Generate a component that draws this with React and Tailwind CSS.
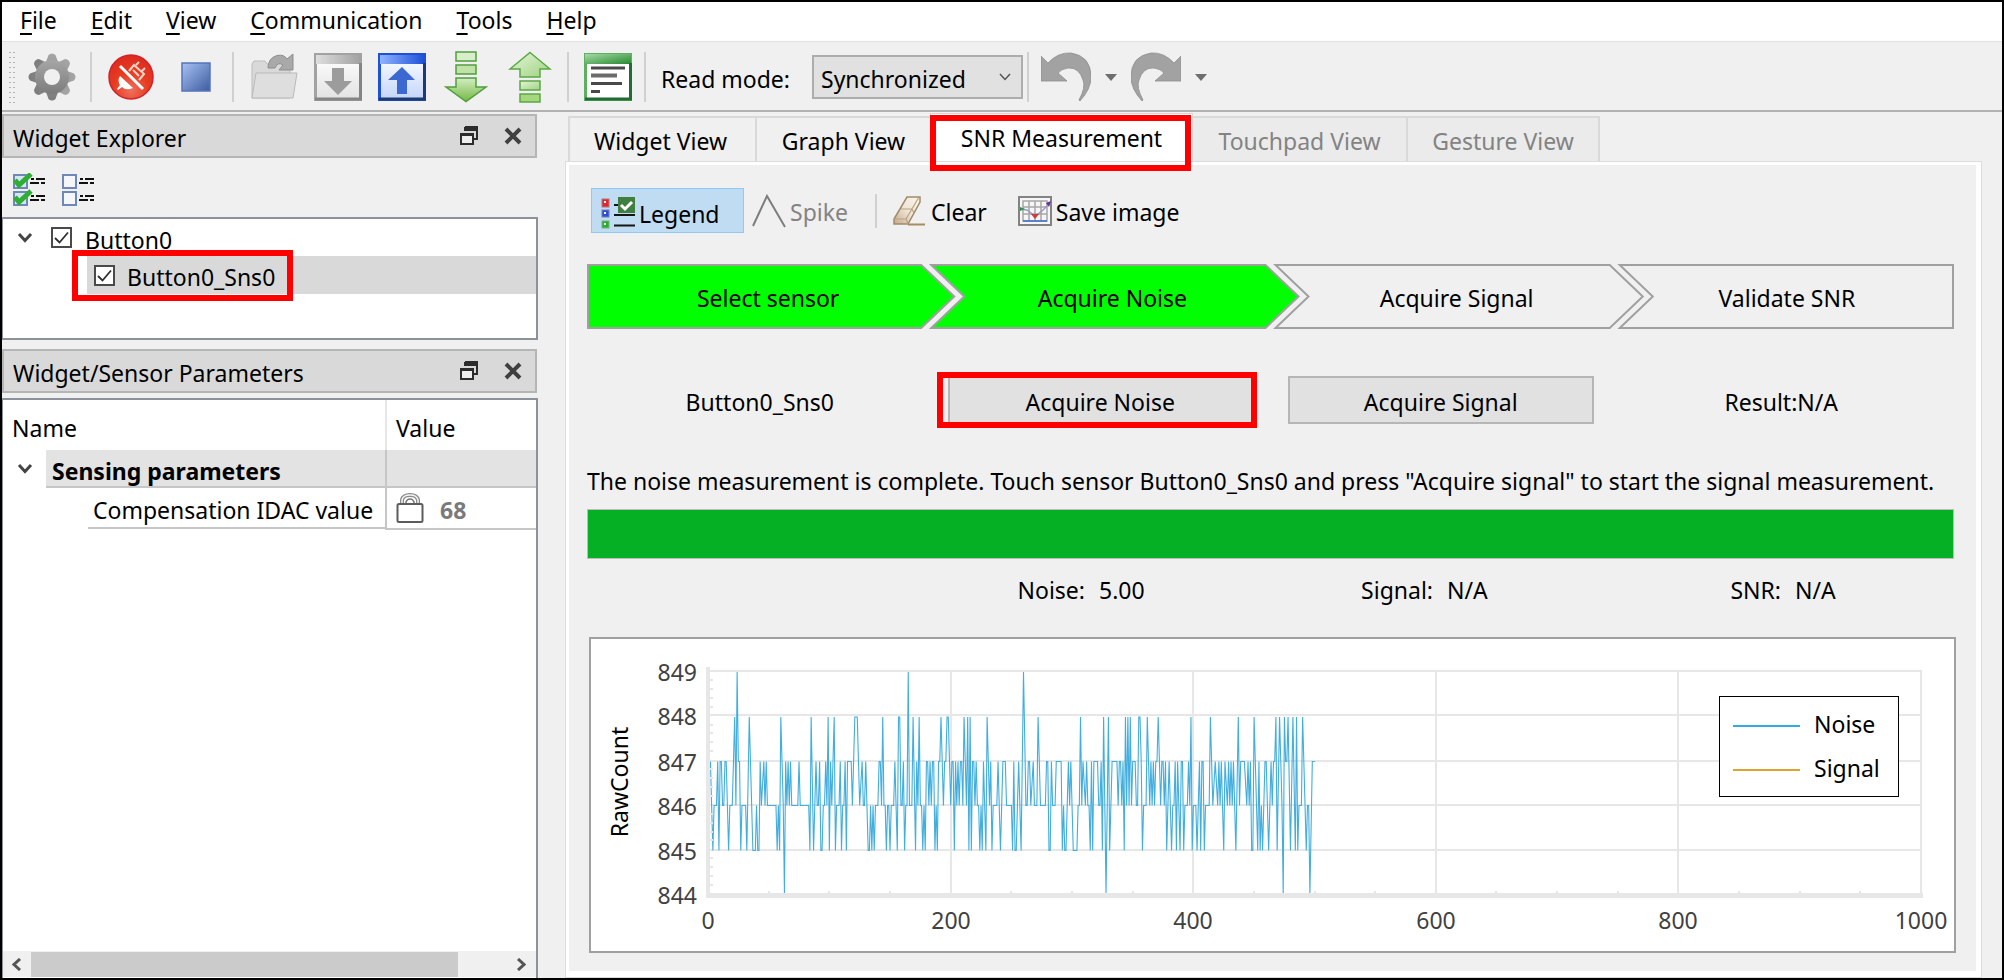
import React from "react";

const SAMPLES =
  "2:7 4:5 5:6 7:6 8:7 9:5 10:7 11:7 12:6 13:6 14:7 15:7 17:5 18:6 20:6 22:8 23:6 24:9 25:7 26:7 27:5 28:6 31:6 32:5 34:8 37:5 39:5 40:6 41:5 42:5 43:7 44:6 46:7 47:6 48:7 49:6 56:6 57:5 58:6 59:5 60:8 62:6 63:4 64:7 65:6 66:7 67:6 68:7 69:6 74:6 75:7 76:6 83:6 84:5 85:8 87:5 89:7 90:6 91:6 92:7 93:5 94:5 95:6 96:6 97:7 98:6 99:8 100:5 101:7 102:6 104:8 105:5 106:6 108:6 109:7 110:5 111:6 112:6 113:7 114:5 115:7 118:7 119:6 121:8 123:8 125:6 127:7 128:6 129:6 130:7 132:5 133:5 134:6 135:5 136:6 137:5 138:6 140:6 141:7 142:7 143:6 144:8 145:6 146:6 147:5 148:6 149:6 150:5 151:6 153:6 154:7 156:5 157:8 158:8 159:6 160:6 161:7 162:5 163:6 164:6 165:9 166:6 168:6 169:8 171:5 172:7 173:6 174:8 175:6 176:6 177:5 178:6 179:5 180:7 181:7 182:6 183:7 184:6 185:7 186:7 187:5 188:6 189:5 190:7 191:7 192:8 194:6 195:7 196:7 197:8 198:8 200:6 201:7 202:7 203:5 204:7 205:6 206:7 207:6 208:7 209:7 210:6 211:8 213:6 214:8 215:5 216:8 217:5 218:7 219:7 220:6 221:7 222:6 223:6 224:5 225:6 226:5 227:7 229:5 230:8 232:6 233:7 234:5 235:6 238:6 239:7 241:5 243:7 245:7 246:6 250:6 251:5 252:7 253:5 254:5 255:6 256:7 257:6 258:5 260:9 262:6 263:6 264:7 265:7 266:6 268:7 269:6 271:6 272:8 274:6 278:6 279:7 280:7 281:5 282:5 283:7 284:6 286:6 287:7 291:7 292:5 293:6 294:5 295:5 297:7 298:6 299:7 301:5 304:5 305:6 306:6 307:8 308:6 309:7 311:6 312:7 313:6 314:6 315:5 316:7 317:5 318:7 321:7 322:6 323:6 324:7 325:5 326:8 328:4 330:8 331:5 333:7 337:7 338:6 339:7 340:7 341:6 342:7 343:5 344:8 345:6 346:8 347:6 348:8 349:6 350:7 352:7 353:6 354:6 355:8 356:8 357:7 358:5 359:6 361:6 362:8 364:6 365:7 366:6 367:7 368:6 369:7 370:7 371:8 373:6 374:7 375:7 376:6 377:7 378:5 380:7 382:5 383:6 384:6 385:7 386:5 387:7 389:5 390:7 391:7 392:5 393:6 395:6 396:7 397:6 398:8 399:5 400:6 402:6 403:5 405:7 406:5 407:7 408:7 409:5 410:6 413:6 414:8 416:6 418:7 420:6 421:7 422:6 423:7 425:5 426:7 428:6 429:7 430:6 431:7 432:6 433:7 435:5 437:8 438:6 439:7 442:7 444:6 445:7 446:6 447:7 448:5 449:5 450:8 452:6 453:5 454:7 455:5 456:6 457:5 459:7 460:7 462:5 464:7 465:6 466:7 467:7 468:8 469:5 471:8 473:6 474:4 475:8 476:7 477:7 478:8 480:5 482:8 484:5 485:8 486:5 487:6 489:6 490:8 492:6 493:5 494:6 495:6 496:4 498:7 500:7";

const X0 = 117;
const PER_SAMPLE = 1.2135;
const LEVEL_Y = { 4: 254, 5: 210.5, 6: 165.5, 7: 121.5, 8: 77, 9: 32 };
const noisePoints = SAMPLES.split(" ")
  .map((pair) => {
    const [n, v] = pair.split(":");
    return `${(X0 + Number(n) * PER_SAMPLE).toFixed(2)},${LEVEL_Y[v]}`;
  })
  .join(" ");

const Y_LABELS = [
  [849, 31],
  [848, 75],
  [847, 121],
  [846, 165],
  [845, 210],
  [844, 254],
];
const X_LABELS = [0, 200, 400, 600, 800, 1000];

function GearIcon() {
  return (
    <svg viewBox="0 0 48 48" className="h-12 w-12" aria-hidden="true">
      <defs>
        <linearGradient id="gear" x1="0" y1="0" x2="0" y2="1">
          <stop offset="0" stopColor="#a6a6a6" />
          <stop offset="1" stopColor="#7c7c7c" />
        </linearGradient>
      </defs>
      <g fill="url(#gear)">
        {[0, 45, 90, 135].map((a) => (
          <path key={a} transform={`rotate(${a} 24 24)`} d="M18 9 L20.500 2 Q24 -1 27.500 2 L30 9 V39 L27.500 46 Q24 49 20.500 46 L18 39Z" />
        ))}
        <circle cx="24" cy="24" r="17" />
      </g>
      <circle cx="24" cy="24" r="8" fill="#f0f0f0" />
    </svg>
  );
}

function DisconnectIcon() {
  return (
    <svg viewBox="0 0 46 46" className="h-[46px] w-[46px]" aria-hidden="true">
      <defs>
        <radialGradient id="disc" cx="0.5" cy="0.8" r="0.8">
          <stop offset="0" stopColor="#f0705f" />
          <stop offset="0.5" stopColor="#e63c20" />
          <stop offset="1" stopColor="#dc2a20" />
        </radialGradient>
      </defs>
      <circle cx="23" cy="23" r="22" fill="url(#disc)" stroke="#d2232a" strokeWidth="1.5" />
      <path d="M12 22 L25 34 Q18 37 14 33 L10 36 L9 35 L12 31 Q9 26 12 22Z" fill="#fff" />
      <path d="M21 17 L26 11 L36 20 L31 26 M25 16 l6 6 M28 11 l3 -3 M34 17 l3 -3" fill="none" stroke="#ffd2c8" strokeWidth="2" />
      <path d="M12 12 L35 35" stroke="#fff" strokeWidth="3" />
    </svg>
  );
}

function StopIcon() {
  return (
    <svg viewBox="0 0 30 30" className="h-[30px] w-[30px]" aria-hidden="true">
      <defs>
        <linearGradient id="stop" x1="0" y1="0" x2="1" y2="1">
          <stop offset="0" stopColor="#a9c2f5" />
          <stop offset="1" stopColor="#3c5c9f" />
        </linearGradient>
      </defs>
      <rect x="1" y="1" width="28" height="28" fill="url(#stop)" stroke="#5474b8" strokeWidth="1.5" />
    </svg>
  );
}

function FolderIcon() {
  return (
    <svg viewBox="0 0 48 48" className="h-12 w-12" aria-hidden="true">
      <path d="M2 11 L4 8 H15 L17 11 H40 V45 H2Z" fill="#d9d9d9" stroke="#bdbdbd" />
      <path d="M18 15 Q18 5 27 2.500 Q34 1 37 6 L43 1 V17 H29 L33 12 Q28 8 25 15Z" fill="#a9a9a9" stroke="#8d8d8d" />
      <path d="M6 20 H47 L43 45 H2Z" fill="#dedede" stroke="#b9b9b9" />
    </svg>
  );
}

function WindowArrowIcon({ id, light, dark, edge, arrow, up }) {
  return (
    <svg viewBox="0 0 48 48" className="h-12 w-12" aria-hidden="true">
      <defs>
        <linearGradient id={id} x1="0" y1="0" x2="1" y2="0">
          <stop offset="0" stopColor={light} />
          <stop offset="1" stopColor={dark} />
        </linearGradient>
        <linearGradient id={`${id}-body`} x1="0" y1="0" x2="0" y2="1">
          <stop offset="0" stopColor="#ffffff" />
          <stop offset="1" stopColor={up ? "#c3d5fa" : "#e2e2e2"} />
        </linearGradient>
      </defs>
      <rect x="1.5" y="1.5" width="45" height="45" fill={`url(#${id}-body)`} stroke={dark} strokeWidth="3" />
      <rect x="2" y="2" width="44" height="9" fill={`url(#${id})`} />
      <path d="M46.500 10 V46 H1" fill="none" stroke={edge} strokeWidth="3" />
      <path
        d={up ? "M24 14 L37 27 H29 V41 H19 V27 H10Z" : "M18 15 H30 V28 H38 L24 42 L10 28 H18Z"}
        fill={arrow}
      />
    </svg>
  );
}

function GreenArrowIcon({ up }) {
  return (
    <svg viewBox="0 0 44 52" className="h-[52px] w-11" aria-hidden="true">
      <defs>
        <linearGradient id="green-arrow" x1="0" y1="0" x2="0" y2="1">
          <stop offset="0" stopColor="#d4edc4" />
          <stop offset="1" stopColor="#74b944" />
        </linearGradient>
        <linearGradient id="green-arrow-up" x1="0" y1="0" x2="1" y2="1">
          <stop offset="0" stopColor="#e6f5dc" />
          <stop offset="1" stopColor="#9fd27e" />
        </linearGradient>
      </defs>
      {up ? (
        <g fill="url(#green-arrow-up)" stroke="#5aa846" strokeWidth="1.5">
          <path d="M22 1.500 L42 18 H32 V26 H12 V18 H2Z" />
          <rect x="12" y="30" width="20" height="9" />
          <rect x="12" y="43" width="20" height="8" fill="#a5d77d" />
        </g>
      ) : (
        <g fill="url(#green-arrow)" stroke="#4f9f3b" strokeWidth="1.500">
          <rect x="12" y="1" width="20" height="9" fill="#d8eecb" />
          <rect x="12" y="14" width="20" height="9" fill="#c0e2a8" />
          <path d="M12 27 H32 V36 H42 L22 50.500 L2 36 H12Z" />
        </g>
      )}
    </svg>
  );
}

function LogIcon() {
  return (
    <svg viewBox="0 0 48 48" className="h-12 w-12" aria-hidden="true">
      <defs>
        <linearGradient id="log" x1="0" y1="0" x2="1" y2="1">
          <stop offset="0" stopColor="#a4dba6" />
          <stop offset="1" stopColor="#27882e" />
        </linearGradient>
      </defs>
      <rect x="1.500" y="1.500" width="45" height="45" fill="#fff" stroke="#5bb062" strokeWidth="3" />
      <rect x="1" y="1" width="46" height="10" fill="url(#log)" />
      <path d="M46.500 10 V46 H1" fill="none" stroke="#236b35" strokeWidth="3" />
      <path d="M7 15 H41 M7 30.500 H38 M7 38.500 H16" stroke="#4a4a4a" strokeWidth="3" />
      <path d="M7 22.500 H33" stroke="#6c6c6c" strokeWidth="4" />
    </svg>
  );
}

function UndoIcon({ flip }) {
  return (
    <svg viewBox="0 0 50 50" className="h-[50px] w-[50px]" aria-hidden="true">
      <g transform={flip ? "translate(50 0) scale(-1 1)" : undefined}>
        <path
          d="M0 4 L7 11 Q17 0 30 1 Q50 4 50 25 Q50 37 39 49 L38 48 Q45 35 42 28 Q38 15 27 16 Q20 17 17 21 L26 29 H0Z"
          fill="#a2a2a2"
          stroke="#8e8e8e"
          strokeWidth="0.8"
        />
      </g>
    </svg>
  );
}

function Caret() {
  return (
    <svg viewBox="0 0 12 7" className="h-[7px] w-3" aria-hidden="true">
      <path d="M0 0 H12 L6 7Z" fill="#6e6e6e" />
    </svg>
  );
}

function TreeChevron() {
  return (
    <svg viewBox="0 0 16 12" className="h-3 w-4" aria-hidden="true">
      <path d="M2 2 L8 8.500 L14 2" fill="none" stroke="#454545" strokeWidth="3" />
    </svg>
  );
}

function FloatIcon() {
  return (
    <svg viewBox="0 0 18 20" className="h-5 w-[18px]" aria-hidden="true">
      <path d="M5 1 H17 V13 H13" fill="none" stroke="#2c2c2c" strokeWidth="2" />
      <path d="M4 3 H18" stroke="#2c2c2c" strokeWidth="4" />
      <path d="M1 8 H13 V18 H1Z" fill="#eee" stroke="#2c2c2c" strokeWidth="2" />
      <path d="M0 8.500 H14" stroke="#2c2c2c" strokeWidth="3" />
    </svg>
  );
}

function CloseIcon() {
  return (
    <svg viewBox="0 0 18 18" className="h-[18px] w-[18px]" aria-hidden="true">
      <path d="M2 2 L16 16 M16 2 L2 16" stroke="#404040" strokeWidth="4" />
    </svg>
  );
}

function CheckListIcon({ checked }) {
  return (
    <svg viewBox="0 0 33 34" className="h-[34px] w-[33px]" aria-hidden="true">
      {[2, 19].map((y) => (
        <g key={y}>
          <rect x="1" y={y} width="13" height="13" fill={checked ? "#d5e6ee" : "#f4f6fa"} stroke="#6f88b8" strokeWidth="2" />
          {checked && (
            <path d={`M2 ${y + 5} L6 ${y + 10} L18 ${y - 1}`} fill="none" stroke="#2fae35" strokeWidth="5" />
          )}
          <path d={`M18 ${y + 4} H21 M23 ${y + 4} H32 M17 ${y + 8} H26 M28 ${y + 8} H32`} stroke="#111" strokeWidth="2" />
        </g>
      ))}
    </svg>
  );
}

function LegendIcon() {
  return (
    <svg viewBox="0 0 34 32" className="h-8 w-[34px]" aria-hidden="true">
      <rect x="1" y="2" width="7" height="8" fill="#e2262e" stroke="#b4747a" />
      <rect x="1" y="13" width="7" height="7" fill="#2c4fd6" stroke="#7480b8" />
      <rect x="1" y="24" width="7" height="7" fill="#26b02c" stroke="#78b080" />
      <rect x="3" y="4" width="2" height="2" fill="#fff" />
      <rect x="3" y="15" width="2" height="2" fill="#fff" />
      <rect x="3" y="26" width="2" height="2" fill="#fff" />
      <path d="M13 8 H18 M13 18 H34 M13 28.500 H34" stroke="#151515" strokeWidth="2" />
      <rect x="17" y="0" width="17" height="16" fill="#3f8040" />
      <path d="M20 8 L24 12 L31 5" fill="none" stroke="#fff" strokeWidth="3" />
    </svg>
  );
}

function SpikeIcon() {
  return (
    <svg viewBox="0 0 34 34" className="h-[34px] w-[34px]" aria-hidden="true">
      <path d="M1 32 L15 2 L33 33" fill="none" stroke="#7d7d7d" strokeWidth="2" />
    </svg>
  );
}

function EraserIcon() {
  return (
    <svg viewBox="0 0 32 30" className="h-[30px] w-8" aria-hidden="true">
      <defs>
        <linearGradient id="eraser" x1="1" y1="0" x2="0" y2="1">
          <stop offset="0" stopColor="#fbf5ec" />
          <stop offset="0.5" stopColor="#efe4d6" />
          <stop offset="1" stopColor="#c4ab8c" />
        </linearGradient>
      </defs>
      <path d="M14 1 H27 V6 L15 28 H1 V23Z" fill="url(#eraser)" stroke="#a08a6a" strokeWidth="1.500" />
      <path d="M1 23 H13 L15 28 M13 23 L26 1 M8 13 H19 L21 17" fill="none" stroke="#b7a184" strokeWidth="1.200" />
      <path d="M15 28.500 H32" stroke="#a58d62" strokeWidth="2" />
    </svg>
  );
}

function SaveImageIcon() {
  return (
    <svg viewBox="0 0 34 30" className="h-[30px] w-[34px]" aria-hidden="true">
      <rect x="1" y="1" width="32" height="28" fill="#f6f6f6" stroke="#838383" strokeWidth="2" />
      <path d="M5 5 H29 V25 H5Z M5 11 H29 M5 18 H29 M11 5 V25 M17 5 V25 M23 5 V25" fill="none" stroke="#a6a6a6" strokeWidth="1.500" />
      <path d="M2 13 L9 14 L17 20 L24 15 L32 7" fill="none" stroke="#9a9ac8" strokeWidth="1.500" />
      <path d="M2 11 L7 13 L2 15Z" fill="#2e9150" />
      <path d="M13 18 H21 L17 23Z" fill="#cf3a3a" />
      <path d="M28 7 L33 5 L31 11Z" fill="#6b2f96" />
      <path d="M5 25 H29" stroke="#3c6fd6" strokeWidth="1.500" />
    </svg>
  );
}

function LockIcon() {
  return (
    <svg viewBox="0 0 28 30" className="h-[30px] w-7" aria-hidden="true">
      <path d="M6 11 V7 Q7 2 14 2 Q21 2 22 7 V11" fill="none" stroke="#8a8a8a" strokeWidth="4" />
      <path d="M6 11 V7 Q7 2 14 2 Q21 2 22 7 V11" fill="none" stroke="#f4f4f4" strokeWidth="1.500" />
      <path d="M10 11 V9 Q11 6 14 6 Q17 6 18 9 V11" fill="none" stroke="#777" strokeWidth="1.500" />
      <rect x="1.500" y="11" width="25" height="18" rx="1.500" fill="#fff" stroke="#5c5c5c" strokeWidth="2" />
    </svg>
  );
}

function ScrollArrow({ right }) {
  return (
    <svg viewBox="0 0 10 13" className="h-[13px] w-[10px]" aria-hidden="true">
      <path d={right ? "M2 1 L8 6.500 L2 12" : "M8 1 L2 6.500 L8 12"} fill="none" stroke="#555" strokeWidth="3" />
    </svg>
  );
}

function ToolButton({ label, className, children }) {
  return (
    <button type="button" aria-label={label} className={`flex h-[52px] shrink-0 items-center justify-center ${className}`}>
      {children}
    </button>
  );
}

function Separator({ className }) {
  return <span className={`h-[50px] w-[2px] shrink-0 bg-[#d0d0d0] ${className}`} />;
}

function MenuBar() {
  return (
    <nav className="flex h-10 items-start border-b border-[#e2e2e2] bg-white pl-px">
      {["File", "Edit", "View", "Communication", "Tools", "Help"].map((name) => (
        <button key={name} type="button" className="px-[17px] leading-9">
          <span className="underline decoration-2 underline-offset-4">{name[0]}</span>
          {name.slice(1)}
        </button>
      ))}
    </nav>
  );
}

function Toolbar() {
  return (
    <div className="flex h-[70px] items-center border-b-2 border-[#b2b2b2] pt-0.5 pl-1.5">
      <span className="h-[54px] w-2 shrink-0 bg-[radial-gradient(circle,#b4b4b4_1px,transparent_1px)] bg-[size:4px_5px]" />
      <ToolButton label="Settings" className="ml-3 w-12"><GearIcon /></ToolButton>
      <Separator className="ml-3.5" />
      <ToolButton label="Disconnect" className="ml-4 w-[46px]"><DisconnectIcon /></ToolButton>
      <ToolButton label="Stop" className="ml-[27px] w-[30px]"><StopIcon /></ToolButton>
      <Separator className="ml-[21px]" />
      <ToolButton label="Open" className="ml-4 w-12"><FolderIcon /></ToolButton>
      <ToolButton label="Download" className="ml-4 w-12">
        <WindowArrowIcon id="win-gray" light="#dedede" dark="#a2a2a2" edge="#848484" arrow="#9c9c9c" />
      </ToolButton>
      <ToolButton label="Upload" className="ml-4 w-12">
        <WindowArrowIcon id="win-blue" light="#8fb4ff" dark="#1f51d8" edge="#1d3a72" arrow="#3c68d2" up />
      </ToolButton>
      <ToolButton label="Apply to device" className="ml-[18px] w-11"><GreenArrowIcon /></ToolButton>
      <ToolButton label="Read from device" className="ml-5 w-11"><GreenArrowIcon up /></ToolButton>
      <Separator className="ml-[15px]" />
      <ToolButton label="Log" className="ml-[15px] w-12"><LogIcon /></ToolButton>
      <Separator className="ml-3" />
      <label htmlFor="read-mode" className="ml-[15px] w-[136px] shrink-0 pt-1 whitespace-nowrap">Read mode:</label>
      <span className="relative ml-[15px] shrink-0">
        <select
          id="read-mode"
          className="h-11 w-[211px] appearance-none border-2 border-[#adadad] bg-[#e1e1e1] pt-1 pl-[7px]"
        >
          <option>Synchronized</option>
        </select>
        <svg viewBox="0 0 12 8" className="pointer-events-none absolute top-[18px] right-3 h-2 w-3" aria-hidden="true">
          <path d="M1 1 L6 6.500 L11 1" fill="none" stroke="#555" strokeWidth="1.500" />
        </svg>
      </span>
      <Separator className="ml-1" />
      <ToolButton label="Undo" className="ml-3 w-[50px]"><UndoIcon /></ToolButton>
      <ToolButton label="Undo history" className="ml-[14px] w-3"><Caret /></ToolButton>
      <ToolButton label="Redo" className="ml-[14px] w-[50px]"><UndoIcon flip /></ToolButton>
      <ToolButton label="Redo history" className="ml-[14px] w-3"><Caret /></ToolButton>
    </div>
  );
}

function DockTitle({ children }) {
  return (
    <div className="mr-px flex h-11 items-center border-2 border-[#b5b5b5] bg-[#d9d9d9] pr-[13px] pl-[9px]">
      <h2 className="flex-1 pt-1">{children}</h2>
      <button type="button" aria-label="Float panel" className="mr-[26px]"><FloatIcon /></button>
      <button type="button" aria-label="Close panel"><CloseIcon /></button>
    </div>
  );
}

function CheckBox({ id }) {
  return (
    <span className="relative flex h-[21px] w-[21px]">
      <input
        id={id}
        type="checkbox"
        defaultChecked
        className="peer h-[21px] w-[21px] appearance-none border-2 border-[#4a4a4a] bg-white"
      />
      <svg viewBox="0 0 21 21" className="pointer-events-none absolute inset-0 hidden peer-checked:block" aria-hidden="true">
        <path d="M4 11 L8.500 15.500 L17 5.500" fill="none" stroke="#2e2e2e" strokeWidth="1.800" />
      </svg>
    </span>
  );
}

function LeftDocks() {
  return (
    <aside className="flex w-[536px] shrink-0 flex-col pt-0.5">
      <DockTitle>Widget Explorer</DockTitle>
      <div className="flex h-[59px] items-center gap-4 pt-1 pl-[11px]">
        <button type="button" aria-label="Check all"><CheckListIcon checked /></button>
        <button type="button" aria-label="Uncheck all"><CheckListIcon /></button>
      </div>
      <ul className="h-[123px] border-2 border-l border-[#8d919c] bg-white">
        <li className="flex h-[37px] items-center">
          <button type="button" aria-label="Collapse Button0" className="mr-[18px] ml-3.5"><TreeChevron /></button>
          <span className="flex w-[34px]"><CheckBox id="button0" /></span>
          <label htmlFor="button0" className="pt-1">Button0</label>
        </li>
        <li className="relative ml-[84px] flex h-[38px] items-center bg-[#d9d9d9]">
          <span className="flex w-10 pl-[7px]"><CheckBox id="button0-sns0" /></span>
          <label htmlFor="button0-sns0" className="pt-1">Button0_Sns0</label>
          <span className="pointer-events-none absolute -top-1.5 -left-[15px] h-[51px] w-[221px] border-6 border-[#ff0000]" />
        </li>
      </ul>
      <div className="mt-[9px]"><DockTitle>Widget/Sensor Parameters</DockTitle></div>
      <div className="mt-[5px] flex flex-1 flex-col border-t-2 border-r-2 border-l border-[#8d919c] bg-white">
        <table className="w-full table-fixed border-collapse text-left">
          <colgroup>
            <col className="w-[43px]" />
            <col className="w-[340px]" />
            <col />
          </colgroup>
          <thead>
            <tr className="h-[50px]">
              <th colSpan={2} className="border-r-2 border-[#e6e6e6] pt-1.5 pl-[9px] font-normal">Name</th>
              <th className="pt-1.5 pl-[9px] font-normal">Value</th>
            </tr>
          </thead>
          <tbody>
            <tr className="h-[37px]">
              <td className="pl-3.5">
                <button type="button" aria-label="Collapse group" className="flex"><TreeChevron /></button>
              </td>
              <td className="border-r-2 border-b-2 border-[#c6c6c6] bg-[#e3e3e3] pt-1.5 pl-1.5 leading-7 font-bold">
                Sensing parameters
              </td>
              <td className="border-b-2 border-[#c6c6c6] bg-[#e3e3e3]" />
            </tr>
            <tr className="h-[41px]">
              <td />
              <td className="border-r-2 border-[#c6c6c6] p-0">
                <span className="ml-[42px] flex h-[41px] items-center border-b-2 border-[#c6c6c6] pt-1 pl-[5px] whitespace-nowrap">
                  Compensation IDAC value
                </span>
              </td>
              <td className="border-b-2 border-[#c6c6c6] pl-[9px]">
                <span className="flex items-center gap-4 font-bold text-[#7a7a7a]">
                  <LockIcon />
                  <span className="pt-1">68</span>
                </span>
              </td>
            </tr>
          </tbody>
        </table>
        <div className="mt-auto mb-px flex h-[26px] items-center bg-[#f0f0f0]">
          <button type="button" aria-label="Scroll left" className="flex w-7 justify-center"><ScrollArrow /></button>
          <span className="h-[25px] w-[427px] bg-[#cbcbcb]" />
          <button type="button" aria-label="Scroll right" className="mr-2.5 ml-auto flex"><ScrollArrow right /></button>
        </div>
      </div>
    </aside>
  );
}

function Tabs() {
  const tab = "h-[45px] shrink-0 border-2 border-b-0 border-[#d9d9d9] leading-[47px] whitespace-nowrap";
  return (
    <div role="tablist" className="flex items-end pl-[3px]">
      <button type="button" role="tab" className={`${tab} w-[187px] border-r-0 pr-1`}>Widget View</button>
      <button type="button" role="tab" className={`${tab} w-[175px] border-r-0`}>Graph View</button>
      <span className="relative flex">
        <button type="button" role="tab" aria-selected="true" className="h-12 w-[263px] border border-b-0 border-[#d9d9d9] bg-white whitespace-nowrap">
          SNR Measurement
        </button>
        <span className="pointer-events-none absolute top-0.5 left-0 z-10 h-14 w-[261px] border-6 border-[#ff0000]" />
      </span>
      <button type="button" role="tab" disabled className={`${tab} w-[215px] border-l-0 bg-[#ebebeb] text-[#838383]`}>Touchpad View</button>
      <button type="button" role="tab" disabled className={`${tab} w-[192px] border-l-0 bg-[#ebebeb] text-[#838383]`}>Gesture View</button>
    </div>
  );
}

function SnrToolbar() {
  return (
    <div className="flex items-center pl-1">
      <button type="button" aria-pressed="true" className="flex h-[45px] w-[153px] items-center gap-1 border border-[#90c8f6] bg-[#c0dcf3] pt-1 pl-[9px]">
        <LegendIcon />
        <span className="pt-0.5">Legend</span>
      </button>
      <button type="button" disabled className="ml-2 flex items-center gap-1 text-[#838383]">
        <SpikeIcon />
        <span className="pt-0.5">Spike</span>
      </button>
      <span className="ml-[27px] h-[34px] w-[2px] bg-[#d0d0d0]" />
      <button type="button" className="ml-4 flex items-center gap-1.5">
        <EraserIcon />
        <span className="pt-0.5">Clear</span>
      </button>
      <button type="button" className="ml-[31px] flex items-center gap-1">
        <SaveImageIcon />
        <span className="pt-0.5">Save image</span>
      </button>
    </div>
  );
}

function Steps() {
  const shape = { stroke: "#a0a0a0", strokeWidth: 2 };
  return (
    <div className="relative mt-[31px] h-[65px]">
      <svg viewBox="0 0 1366 65" preserveAspectRatio="none" className="absolute inset-0 h-full w-full" aria-hidden="true">
        <path d="M1 1 H334 L367 32.500 L334 64 H1Z" fill="#00ff00" {...shape} />
        <path d="M344 1 H678 L711 32.500 L678 64 H344 L377 32.500Z" fill="#00ff00" {...shape} />
        <path d="M688 1 H1022 L1055 32.500 L1022 64 H688 L721 32.500Z" fill="#f0f0f0" {...shape} />
        <path d="M1032 1 H1365 V64 H1032 L1065 32.500Z" fill="#f0f0f0" {...shape} />
      </svg>
      <ol className="relative grid h-full grid-cols-4 items-center gap-[10px] pt-0.5 text-center">
        <li className="-mr-7">Select sensor</li>
        <li className="-mr-7">Acquire Noise</li>
        <li className="-mr-7">Acquire Signal</li>
        <li>Validate SNR</li>
      </ol>
    </div>
  );
}

function NoiseChart() {
  return (
    <figure className="mt-[30px] -mr-[2px] ml-0.5 border-2 border-[#a0a0a0] bg-white">
      <svg viewBox="0 -1 1363 312" className="block w-full" role="img" aria-label="RawCount over samples">
        <g stroke="#e7e7e7" strokeWidth="2">
          {Y_LABELS.map(([v, y]) => (
            <path key={v} d={`M117 ${y} H1331`} />
          ))}
          {X_LABELS.map((v) => (
            <path key={v} d={`M${117 + Math.round(v * 1.213)} 31 V254`} />
          ))}
        </g>
        <polyline points={noisePoints} fill="none" stroke="#41aedd" strokeWidth="1.100" />
        <path d="M117 27 V258" stroke="#e7e7e7" strokeWidth="4" />
        <path d="M115 255.500 H1332" stroke="#e7e7e7" strokeWidth="5" />
        <g stroke="#e7e7e7" strokeWidth="2">
          {Array.from({ length: 25 }, (_, i) =>
            i % 5 === 0 ? null : <path key={i} d={`M119 ${31 + Math.round(i * 8.92)} h3`} />
          )}
          {Array.from({ length: 20 }, (_, i) =>
            i % 4 === 0 ? null : <path key={i} d={`M${117 + Math.round(i * 60.65)} 251 v3`} />
          )}
        </g>
        <g fill="#414141" fontSize="23">
          {Y_LABELS.map(([v, y]) => (
            <text key={v} x="106" y={y + 10} textAnchor="end">{v}</text>
          ))}
          {X_LABELS.map((v) => (
            <text key={v} x={117 + Math.round(v * 1.213)} y="289" textAnchor="middle">{v}</text>
          ))}
        </g>
        <text transform="translate(37 142) rotate(-90)" textAnchor="middle" fontSize="23">RawCount</text>
        <rect x="1128.500" y="56.500" width="179" height="100" fill="#fff" stroke="#000" />
        <path d="M1142 86 H1209" stroke="#30addd" strokeWidth="2" />
        <path d="M1142 130 H1209" stroke="#dca52e" strokeWidth="2" />
        <text x="1223" y="93" fontSize="23">Noise</text>
        <text x="1223" y="137" fontSize="23">Signal</text>
      </svg>
    </figure>
  );
}

function Readout({ name, value }) {
  return (
    <div className="grid grid-cols-2 gap-[14px]">
      <dt className="text-right">{name}</dt>
      <dd>{value}</dd>
    </div>
  );
}

function SnrPanel() {
  const action = "h-12 w-full border-2 border-[#b6b6b6] bg-[#e1e1e1] pt-1";
  return (
    <section className="flex flex-1 flex-col border border-[#dcdcdc]">
      <div className="flex-1 border-t-3 border-r-5 border-b-6 border-l-3 border-white bg-[#f0f0f0] pt-[23px] pr-[22px] pl-[18px]">
        <SnrToolbar />
        <Steps />
        <div className="mt-[47px] grid grid-cols-4 items-center gap-[35px] px-5 text-center">
          <p className="pt-1">Button0_Sns0</p>
          <span className="relative block">
            <button type="button" className={action}>Acquire Noise</button>
            <span className="pointer-events-none absolute -inset-y-1 -right-1 -left-[11px] border-6 border-[#ff0000]" />
          </span>
          <button type="button" className={action}>Acquire Signal</button>
          <p className="pt-1">Result:N/A</p>
        </div>
        <p className="mt-[41px] leading-8 whitespace-nowrap">
          The noise measurement is complete. Touch sensor Button0_Sns0 and press "Acquire signal" to start the signal measurement.
        </p>
        <div
          role="progressbar"
          aria-label="Measurement progress"
          aria-valuenow={100}
          className="mt-3 h-[50px] border border-[#bcbcbc] bg-[#06b025]"
        />
        <dl className="mt-[14px] -mr-2 grid grid-cols-3 pl-[331px] leading-[34px]">
          <Readout name="Noise:" value="5.00" />
          <Readout name="Signal:" value="N/A" />
          <Readout name="SNR:" value="N/A" />
        </dl>
        <NoiseChart />
      </div>
    </section>
  );
}

export default function App() {
  return (
    <div className="flex min-h-screen flex-col border-2 border-black bg-[#f0f0f0] font-['Noto_Sans','Open_Sans',sans-serif] text-[23px] leading-8 text-black">
      <MenuBar />
      <Toolbar />
      <div className="flex flex-1">
        <LeftDocks />
        <main className="ml-[27px] flex min-w-0 flex-1 flex-col pt-px pr-5">
          <Tabs />
          <SnrPanel />
        </main>
      </div>
    </div>
  );
}
